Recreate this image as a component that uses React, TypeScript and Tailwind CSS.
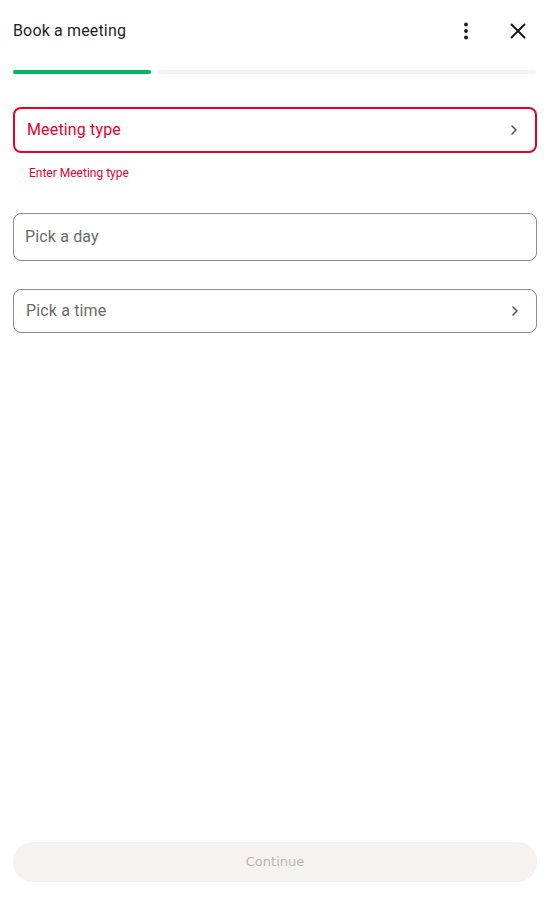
import React from 'react'

function Chevron() {
  return (
    <svg width='16' height='16' viewBox='0 0 16 16' fill='none' className='shrink-0'>
      <path d='M6 4l4 4-4 4' stroke='#555' strokeWidth='1.6' strokeLinecap='round' strokeLinejoin='round' />
    </svg>
  )
}

function Kebab() {
  return (
    <svg width='20' height='20' viewBox='0 0 20 20' fill='#1a1a1a'>
      <circle cx='10' cy='3.5' r='1.9' />
      <circle cx='10' cy='10' r='1.9' />
      <circle cx='10' cy='16.5' r='1.9' />
    </svg>
  )
}

function Close() {
  return (
    <svg width='20' height='20' viewBox='0 0 20 20' fill='none'>
      <path d='M3.5 3.5l13 13M16.5 3.5l-13 13' stroke='#1a1a1a' strokeWidth='2' strokeLinecap='round' />
    </svg>
  )
}

export default function App() {
  return (
    <div className='h-[901px] w-full bg-white flex flex-col font-["Roboto",sans-serif] pl-[13px] pr-[16px]'>
      {/* header */}
      <div className='flex items-center h-[60px] pt-[1px]'>
        <h1 className='flex-1 text-[16px] tracking-[0.15px] text-[#1f1f1f]'>Book a meeting</h1>
        <button className='w-6 h-6 flex items-center justify-center mr-[28px]'>
          <Kebab />
        </button>
        <button className='w-6 h-6 flex items-center justify-center mr-[7px]'>
          <Close />
        </button>
      </div>

      {/* progress */}
      <div className='flex gap-[6px] mt-[10px] pr-[1px]'>
        <div className='h-[4px] w-[138px] rounded-full bg-[#00b960]' />
        <div className='h-[4px] flex-1 rounded-full bg-[#f3f3f2]' />
      </div>

      {/* fields */}
      <div className='mt-[33px] flex flex-col'>
        <button className='h-[46px] rounded-[8px] border-2 border-[#e8002d] flex items-center pl-[12px] pr-[13px] text-left'>
          <span className='flex-1 text-[16px] tracking-[0.15px] text-[#e8002d]'>Meeting type</span>
          <Chevron />
        </button>
        <p className='text-[12px] text-[#e8002d] pl-[16px] mt-[12px] leading-[16px]'>Enter Meeting type</p>

        <div className='mt-[32px] h-[48px] rounded-[8px] border border-[#8c8c8c] flex items-center px-[11px]'>
          <span className='text-[16px] tracking-[0.15px] text-[#6b6b6b]'>Pick a day</span>
        </div>

        <button className='mt-[28px] h-[44px] rounded-[8px] border border-[#8c8c8c] flex items-center pl-[12px] pr-[13px] text-left'>
          <span className='flex-1 text-[16px] tracking-[0.15px] text-[#6b6b6b]'>Pick a time</span>
          <Chevron />
        </button>
      </div>

      <div className='flex-1' />

      <button className='mb-[19px] h-[40px] rounded-full bg-[#f4f3f1] text-[13px] text-[#b8b6b4] font-["DejaVu_Sans",sans-serif]'>
        Continue
      </button>
    </div>
  )
}
